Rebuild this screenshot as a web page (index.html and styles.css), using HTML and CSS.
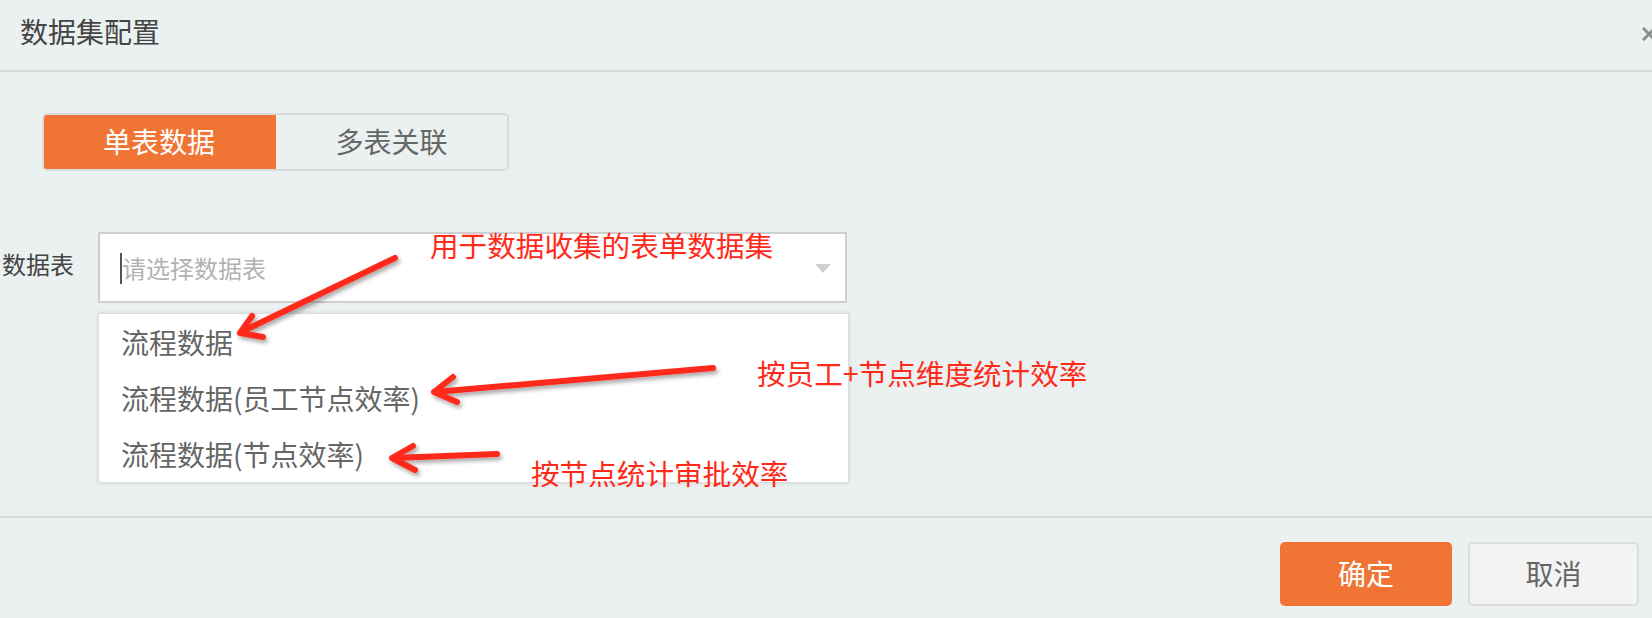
FILE: index.html
```html
<!DOCTYPE html>
<html lang="zh-CN">
<head>
<meta charset="utf-8">
<title>数据集配置</title>
<link rel="stylesheet" href="styles.css">
</head>
<body>
<div class="dialog">
  <header class="dlg-head">
    <h1 class="dlg-title">数据集配置</h1>
    <span class="dlg-close" aria-label="关闭">
      <svg width="14" height="14" viewBox="0 0 14 14"><path d="M2 2 L12 12 M12 2 L2 12" stroke="#8a8c8d" stroke-width="3" stroke-linecap="square"/></svg>
    </span>
  </header>

  <main class="dlg-body">
    <div class="seg">
      <span class="seg-item active">单表数据</span>
      <span class="seg-item">多表关联</span>
    </div>

    <div class="form-row">
      <label class="form-label">数据表</label>
      <div class="select-wrap">
        <div class="select">
          <span class="caret"></span>
          <span class="placeholder">请选择数据表</span>
          <span class="tri"></span>
        </div>
        <ul class="options">
          <li>流程数据</li>
          <li>流程数据(员工节点效率)</li>
          <li>流程数据(节点效率)</li>
        </ul>
      </div>
    </div>
  </main>

  <footer class="dlg-foot">
    <button class="btn btn-primary">确定</button>
    <button class="btn btn-default">取消</button>
  </footer>

  <div class="note note-1">用于数据收集的表单数据集</div>
  <div class="note note-2">按员工+节点维度统计效率</div>
  <div class="note note-3">按节点统计审批效率</div>

  <svg class="arrows" width="1652" height="618" viewBox="0 0 1652 618">
    <defs>
      <filter id="sh" x="-20%" y="-50%" width="140%" height="200%">
        <feDropShadow dx="2" dy="3" stdDeviation="2" flood-color="#000" flood-opacity="0.35"/>
      </filter>
    </defs>
    <g fill="none" stroke="#ff2a1a" stroke-width="6" stroke-linecap="round" stroke-linejoin="round" filter="url(#sh)">
      <path d="M395 258 L241 332"/>
      <path d="M252 316 L240 333 L263 337"/>
      <path d="M713 368 L435 392"/>
      <path d="M453 377 L434 392 L457 402"/>
      <path d="M497 454 L393 458"/>
      <path d="M413 446 L392 458 L415 470"/>
    </g>
  </svg>
</div>
</body>
</html>
```

FILE: styles.css
```css
* { box-sizing: border-box; }

html, body {
  margin: 0;
  padding: 0;
}

body {
  width: 1652px;
  height: 618px;
  overflow: hidden;
  background: #ebf0f0;
  font-family: "Noto Sans CJK SC", "Noto Sans", sans-serif;
}

.dialog {
  position: relative;
  width: 1652px;
  height: 618px;
  display: flex;
  flex-direction: column;
  background: #ebf0f0;
}

.dlg-head {
  height: 72px;
  flex: none;
  display: flex;
  align-items: center;
  justify-content: space-between;
  padding: 0 0 8px 20px;
  border-bottom: 2px solid #d8dbdc;
}

.dlg-title {
  margin: 0;
  font-size: 28px;
  font-weight: normal;
  color: #444;
  line-height: 40px;
}

.dlg-close {
  display: flex;
  margin-right: -4px;
  margin-top: 6px;
}

.dlg-body {
  flex: 1;
  padding: 41px 0 0 0;
}

.seg {
  margin-left: 42px;
  width: 467px;
  height: 58px;
  display: flex;
  border: 2px solid #d9dcdd;
  border-radius: 5px;
  overflow: hidden;
}

.seg-item {
  display: flex;
  align-items: center;
  justify-content: center;
  font-size: 28px;
  color: #666;
  flex: 1;
  padding-bottom: 2px;
}

.seg-item.active {
  flex: none;
  width: 234px;
  margin: -2px 0 -2px -2px;
  background: #f07534;
  color: #fff;
}

.form-row {
  display: flex;
  align-items: flex-start;
  margin-top: 61px;
}

.form-label {
  width: 98px;
  flex: none;
  padding-left: 2px;
  font-size: 24px;
  color: #444;
  line-height: 64px;
}

.select-wrap {
  position: relative;
  width: 749px;
}

.select {
  height: 71px;
  background: #fff;
  border: 2px solid #cfcfcf;
  display: flex;
  align-items: center;
  padding-left: 20px;
}

.caret {
  width: 2px;
  height: 31px;
  background: #555;
  margin-top: 2px;
}

.placeholder {
  font-size: 24px;
  color: #b2b2b2;
  margin-left: 0;
  flex: 1;
  line-height: 30px;
}

.tri {
  width: 0;
  height: 0;
  border-left: 8px solid transparent;
  border-right: 8px solid transparent;
  border-top: 9px solid #cfcfcf;
  margin-right: 14px;
  margin-top: 2px;
}

.options {
  position: absolute;
  left: 0;
  top: 81px;
  width: 751px;
  margin: 0;
  padding: 0;
  list-style: none;
  background: #fff;
  border: 1px solid #dcdcdc;
  box-shadow: 0 0 4px rgba(0, 0, 0, 0.12);
}

.options li {
  height: 56px;
  line-height: 56px;
  padding-left: 22px;
  font-size: 28px;
  color: #666;
}

.dlg-foot {
  flex: none;
  height: 102px;
  border-top: 2px solid #d8dbdc;
  display: flex;
  justify-content: flex-end;
  align-items: flex-start;
  gap: 16px;
  padding: 24px 13px 0 0;
}

.btn {
  width: 172px;
  height: 64px;
  border-radius: 5px;
  font-family: inherit;
  font-size: 28px;
  padding: 0 0 2px 0;
  cursor: pointer;
}

.btn-primary {
  background: #f07534;
  color: #fff;
  border: none;
}

.btn-default {
  width: 171px;
  background: #f3f3f3;
  color: #666;
  border: 2px solid #dcdcdc;
}

.note {
  position: absolute;
  font-size: 28.6px;
  line-height: 28px;
  color: #ff2a1a;
  white-space: nowrap;
}

.note-1 { left: 430px; top: 231px; }
.note-2 { left: 757px; top: 359px; }
.note-3 { left: 531px; top: 459px; }

.arrows {
  position: absolute;
  left: 0;
  top: 0;
  pointer-events: none;
}
```
